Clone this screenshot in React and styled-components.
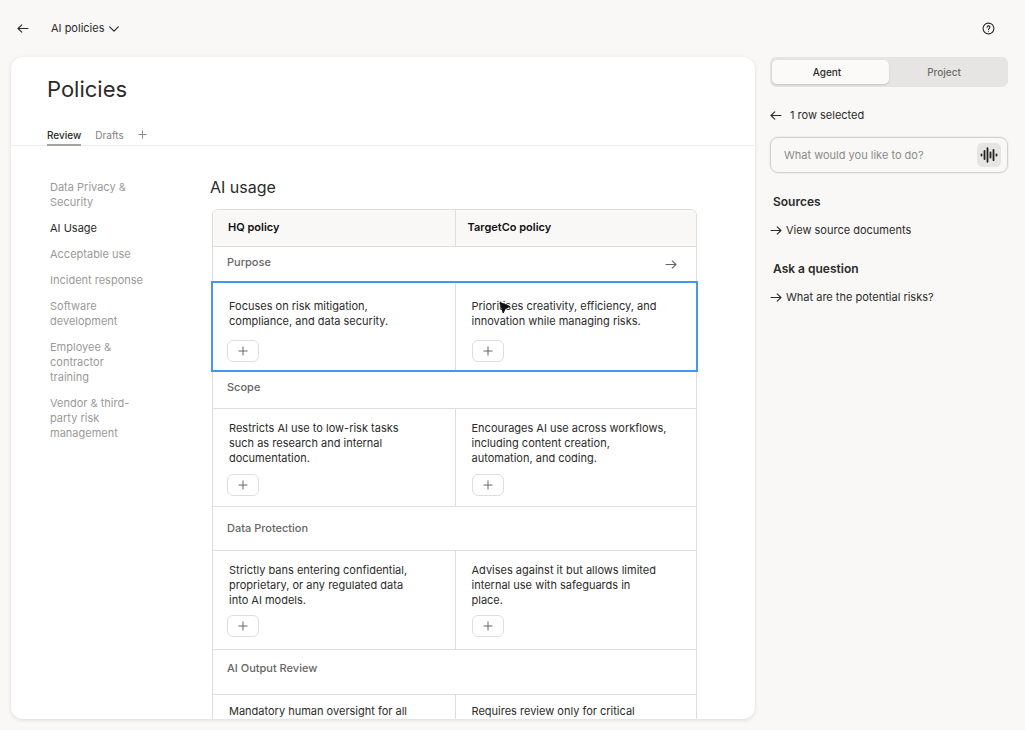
import styled, { createGlobalStyle } from 'styled-components';

const GlobalStyle = createGlobalStyle`
    * {
        box-sizing: border-box;
    }

    body {
        margin: 0;
        background: #f9f8f6;
        color: #2b2b29;
        font-family: Inter, 'Liberation Sans', sans-serif;
        font-size: 11px;
        line-height: 15px;
    }

    button,
    input {
        font: inherit;
        color: inherit;
    }
`;

const Page = styled.div`
    display: flex;
    flex-direction: column;
    height: 100vh;
`;

const IconButton = styled.button`
    display: flex;
    padding: 0;
    border: 0;
    background: none;
    cursor: pointer;
`;

const TopBar = styled.header`
    display: flex;
    align-items: center;
    flex-shrink: 0;
    height: 57px;
    padding: 0 30px 0 17px;
`;

const Switcher = styled(IconButton)`
    align-items: center;
    gap: 5px;
    margin: 0 auto 0 22px;
`;

const Body = styled.div`
    display: grid;
    grid-template-columns: minmax(0, 1fr) 238px;
    grid-template-rows: minmax(0, 1fr);
    gap: 15px;
    flex: 1;
    min-height: 0;
    padding: 0 17px 11px 11px;
`;

const Card = styled.main`
    overflow: hidden;
    border-radius: 12px;
    background: #fff;
    box-shadow: 0 1px 4px rgba(0, 0, 0, 0.12);
`;

const Title = styled.h1`
    margin: 0;
    padding: 16px 36px 0;
    font-size: 22px;
    font-weight: 400;
    line-height: 32px;
`;

const Tabs = styled.nav`
    display: flex;
    gap: 14px;
    margin-top: 20px;
    padding: 0 36px;
    border-bottom: 1px solid #efefee;
`;

const Tab = styled.button`
    height: 21px;
    margin-bottom: -1px;
    padding: 1px 0 0;
    border: 0;
    border-bottom: 2px solid ${(props) => (props.$active ? '#a3a3a0' : 'transparent')};
    background: none;
    color: ${(props) => (props.$active ? '#2b2b29' : '#80807d')};
    font-size: 10px;
    font-weight: ${(props) => (props.$active ? 500 : 400)};
`;

const Columns = styled.div`
    display: flex;
    gap: 62px;
    padding: 31px 58px 0 39px;
`;

const SideNav = styled.nav`
    display: flex;
    flex-direction: column;
    gap: 11px;
    flex: 0 0 100px;
    padding-top: 3px;
`;

const NavLink = styled.a`
    max-width: ${(props) => (props.$narrow ? 88 : 100)}px;
    color: ${(props) => (props.$active ? '#2b2b29' : '#9a9a97')};
    text-decoration: none;
`;

const Section = styled.section`
    flex: 1;
    min-width: 0;
`;

const SectionTitle = styled.h2`
    margin: 0 0 12px -2px;
    font-size: 16px;
    font-weight: 400;
    line-height: 20px;
`;

const Table = styled.table`
    width: 100%;
    table-layout: fixed;
    border: 1px solid #dededc;
    border-radius: 6px 6px 0 0;
    border-spacing: 0;
`;

const HeadCell = styled.th`
    height: 36px;
    padding: 0 ${(props) => (props.$second ? 12 : 15)}px 2px;
    border-left: ${(props) => (props.$second ? '1px solid #dededc' : '0')};
    border-radius: ${(props) => (props.$second ? '0 5px 0 0' : '5px 0 0 0')};
    background: #f9f8f6;
    color: #111;
    font-weight: 600;
    text-align: left;
`;

const GroupCell = styled.th`
    height: ${(props) => props.$height}px;
    padding: 0 19px 0 14px;
    border-top: 1px solid #dededc;
    color: #666663;
    font-weight: 500;
    text-align: left;
`;

const GroupLine = styled.div`
    display: flex;
    align-items: center;
    justify-content: space-between;
`;

const GroupName = styled.span`
    padding-bottom: ${(props) => props.$lift || 0}px;
`;

const Row = styled.tr`
    position: relative;
    z-index: ${(props) => (props.$selected ? 1 : 0)};
    outline: ${(props) => (props.$selected ? '2px solid #4696ea' : 'none')};
`;

const Cell = styled.td`
    position: relative;
    padding: ${(props) => props.$top}px 14px ${(props) => props.$bottom}px ${(props) => (props.$second ? 16 : 14)}px;
    border-top: 1px solid ${(props) => (props.$selected ? 'transparent' : '#dededc')};
    border-left: ${(props) => (props.$second ? '1px solid #dededc' : '0')};
    vertical-align: top;
`;

const CellText = styled.p`
    max-width: ${(props) => (props.$second ? 200 : 190)}px;
    margin: 0;
    padding-left: ${(props) => (props.$second ? 0 : 2)}px;
    white-space: pre-line;
`;

const AddButton = styled.button`
    display: flex;
    align-items: center;
    justify-content: center;
    width: 32px;
    height: 22px;
    margin-top: ${(props) => props.$gap}px;
    padding: 0;
    border: 1px solid #dededc;
    border-radius: 6px;
    background: #fff;
    color: #666663;
`;

const Pointer = styled.svg`
    position: absolute;
    top: 17px;
    left: 43px;
`;

const Panel = styled.aside`
    min-width: 0;
`;

const Segmented = styled.div`
    display: grid;
    grid-template-columns: 1fr 1fr;
    height: 30px;
    padding: 3px 2px;
    border-radius: 6px;
    background: #e6e5e3;
`;

const Segment = styled.button`
    padding: 0 7px 0 0;
    border: 0;
    border-radius: 5px;
    background: ${(props) => (props.$active ? '#fbfaf9' : 'none')};
    box-shadow: ${(props) => (props.$active ? '0 1px 2px rgba(0, 0, 0, 0.15)' : 'none')};
    color: ${(props) => (props.$active ? '#2b2b29' : '#6d6d6a')};
    font-size: 10px;
    font-weight: 500;
`;

const Selection = styled.div`
    display: flex;
    align-items: center;
    gap: 8px;
    margin-top: 21px;
`;

const Prompt = styled.label`
    display: flex;
    align-items: center;
    height: 36px;
    margin-top: 14px;
    padding: 0 6px 0 13px;
    border: 1px solid #d2d1cf;
    border-radius: 8px;
    box-shadow: 0 0 0 1px #efeeec;
`;

const PromptInput = styled.input`
    flex: 1;
    min-width: 0;
    padding: 0;
    border: 0;
    outline: 0;
    background: none;

    &::placeholder {
        color: #8b8b88;
        opacity: 1;
    }
`;

const VoiceButton = styled(IconButton)`
    align-items: center;
    justify-content: center;
    width: 24px;
    height: 24px;
    border-radius: 5px;
    background: #e6e5e3;
`;

const PanelTitle = styled.h3`
    margin: ${(props) => props.$top}px 0 14px 3px;
    font-size: 12px;
    font-weight: 600;
    line-height: 15px;
`;

const PanelLink = styled.a`
    display: flex;
    align-items: center;
    gap: 4px;
    color: inherit;
    text-decoration: none;
`;

const groups = [
    {
        name: 'Purpose',
        height: 37,
        lift: 5,
        arrow: true,
        selected: true,
        top: 15,
        gap: 11,
        bottom: 8,
        hq: 'Focuses on risk mitigation, compliance, and data security.',
        target: 'Prioritises creativity, efficiency, and innovation while managing risks.',
    },
    {
        name: 'Scope',
        height: 38,
        lift: 5,
        top: 12,
        gap: 8,
        bottom: 10,
        hq: 'Restricts AI use to low-risk tasks such as research and internal documentation.',
        target: 'Encourages AI use across workflows, including content creation, automation, and coding.',
    },
    {
        name: 'Data Protection',
        height: 44,
        top: 12,
        gap: 7,
        bottom: 12,
        hq: 'Strictly bans entering confidential, proprietary, or any regulated data into AI models.',
        target: 'Advises against it but allows limited internal use with safeguards in\nplace.',
    },
    {
        name: 'AI Output Review',
        height: 45,
        lift: 7,
        top: 9,
        gap: 9,
        bottom: 12,
        hq: 'Mandatory human oversight for all',
        target: 'Requires review only for critical',
    },
];

const navItems = [
    'Data Privacy & Security',
    'AI Usage',
    'Acceptable use',
    'Incident response',
    'Software development',
    'Employee & contractor training',
    'Vendor & third-party risk management',
];

function Arrow({ left }) {
    return (
        <svg width="12" height="12" viewBox="0 0 12 12" fill="none" stroke="currentColor" strokeWidth="1.1" strokeLinecap="round" strokeLinejoin="round">
            <path d={left ? 'M11 5.5H1M4.8 1.8L1 5.5l3.8 3.7' : 'M1 5.5h10M7.2 1.8L11 5.5 7.2 9.2'} />
        </svg>
    );
}

function Plus({ size = 10 }) {
    return (
        <svg width={size} height={size} viewBox="0 0 10 10" fill="none" stroke="currentColor">
            <path d="M5 .5v9M.5 5h9" />
        </svg>
    );
}

function PolicyCell({ group, text, second, pointer }) {
    return (
        <Cell $top={group.top} $bottom={group.bottom} $second={second} $selected={group.selected}>
            <CellText $second={second}>{text}</CellText>
            <AddButton $gap={group.gap} aria-label="Add">
                <Plus />
            </AddButton>
            {pointer && (
                <Pointer width="13" height="14" viewBox="0 0 13 14">
                    <path d="M1.2 1.6l9.4 3.8-4.2 2L4.2 12z" fill="#111" stroke="#111" strokeLinejoin="round" />
                </Pointer>
            )}
        </Cell>
    );
}

export default function App() {
    return (
        <Page>
            <GlobalStyle />
            <TopBar>
                <IconButton aria-label="Back">
                    <Arrow left />
                </IconButton>
                <Switcher>
                    AI policies
                    <svg width="10" height="6" viewBox="0 0 10 6" fill="none" stroke="currentColor" strokeWidth="1.2" strokeLinecap="round" strokeLinejoin="round">
                        <path d="M.7.8L5 5.1 9.3.8" />
                    </svg>
                </Switcher>
                <IconButton aria-label="Help">
                    <svg width="13" height="13" viewBox="0 0 13 13" fill="none" stroke="currentColor" strokeWidth="1.1" strokeLinecap="round">
                        <circle cx="6.5" cy="6.5" r="5.4" />
                        <path d="M5.1 5.3a1.4 1.4 0 1 1 2.1 1.2c-.5.3-.7.5-.7.9" />
                        <path d="M6.5 9.2v.1" />
                    </svg>
                </IconButton>
            </TopBar>
            <Body>
                <Card>
                    <Title>Policies</Title>
                    <Tabs>
                        <Tab $active>Review</Tab>
                        <Tab>Drafts</Tab>
                        <Tab aria-label="Add tab">
                            <Plus size={9} />
                        </Tab>
                    </Tabs>
                    <Columns>
                        <SideNav>
                            {navItems.map((item, i) => (
                                <NavLink href="#" key={item} $active={i === 1} $narrow={i !== 3}>
                                    {item}
                                </NavLink>
                            ))}
                        </SideNav>
                        <Section>
                            <SectionTitle>AI usage</SectionTitle>
                            <Table>
                                <thead>
                                    <tr>
                                        <HeadCell>HQ policy</HeadCell>
                                        <HeadCell $second>TargetCo policy</HeadCell>
                                    </tr>
                                </thead>
                                {groups.map((group) => (
                                    <tbody key={group.name}>
                                        <tr>
                                            <GroupCell colSpan={2} $height={group.height}>
                                                <GroupLine>
                                                    <GroupName $lift={group.lift}>{group.name}</GroupName>
                                                    {group.arrow && <Arrow />}
                                                </GroupLine>
                                            </GroupCell>
                                        </tr>
                                        <Row $selected={group.selected}>
                                            <PolicyCell group={group} text={group.hq} />
                                            <PolicyCell group={group} text={group.target} second pointer={group.selected} />
                                        </Row>
                                    </tbody>
                                ))}
                            </Table>
                        </Section>
                    </Columns>
                </Card>
                <Panel>
                    <Segmented>
                        <Segment $active>Agent</Segment>
                        <Segment>Project</Segment>
                    </Segmented>
                    <Selection>
                        <IconButton aria-label="Clear selection">
                            <Arrow left />
                        </IconButton>
                        1 row selected
                    </Selection>
                    <Prompt>
                        <PromptInput aria-label="Prompt" placeholder="What would you like to do?" />
                        <VoiceButton aria-label="Voice">
                            <svg width="18" height="16" viewBox="0 0 18 16" fill="none" stroke="#222" strokeWidth="1.8" strokeLinecap="round">
                                <path d="M1.5 7.4v1.2M4.5 4v8M7.5 1.2v13.6M10.5 5.5v5M13.5 2.8v10.4M16.5 7.4v1.2" />
                            </svg>
                        </VoiceButton>
                    </Prompt>
                    <PanelTitle $top={21}>Sources</PanelTitle>
                    <PanelLink href="#">
                        <Arrow />
                        View source documents
                    </PanelLink>
                    <PanelTitle $top={23}>Ask a question</PanelTitle>
                    <PanelLink href="#">
                        <Arrow />
                        What are the potential risks?
                    </PanelLink>
                </Panel>
            </Body>
        </Page>
    );
}
